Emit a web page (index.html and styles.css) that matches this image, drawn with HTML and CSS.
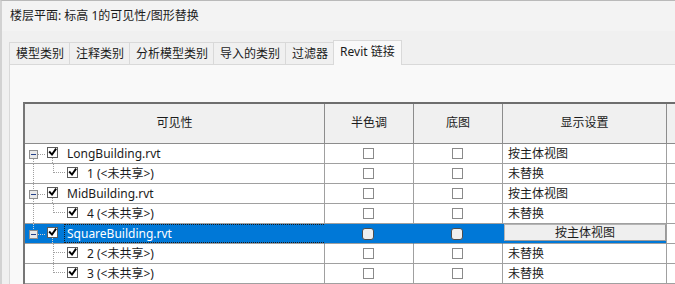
FILE: index.html
```html
<!DOCTYPE html>
<html lang="zh-CN">
<head>
<meta charset="utf-8">
<title>可见性/图形替换</title>
<link rel="stylesheet" href="styles.css">
</head>
<body>
<div class="window">
  <div class="titlebar">楼层平面: 标高 1的可见性/图形替换</div>
  <div class="main">
    <div class="tabs">
      <div class="tab">模型类别</div>
      <div class="tab">注释类别</div>
      <div class="tab">分析模型类别</div>
      <div class="tab">导入的类别</div>
      <div class="tab">过滤器</div>
      <div class="tab active">Revit 链接</div>
    </div>
    <div class="panel">
      <div class="grid">
        <div class="row head">
          <div class="cell">可见性</div>
          <div class="cell">半色调</div>
          <div class="cell">底图</div>
          <div class="cell">显示设置</div>
          <div class="cell"></div>
        </div>

        <div class="row">
          <div class="cell tree">
            <svg class="glyph l0" width="42" height="19" viewBox="0 0 42 19">
              <line class="dot" x1="8.5" y1="15" x2="8.5" y2="19"/>
              <rect class="exp" x="4.5" y="6.5" width="8" height="8"/>
              <line class="minus" x1="6" y1="10.5" x2="11" y2="10.5"/>
              <line class="dot" x1="13" y1="10.5" x2="21" y2="10.5"/>
              <line class="dot" x1="27.5" y1="14" x2="27.5" y2="19"/>
              <rect class="cb" x="22.5" y="3.5" width="10" height="10"/>
              <path class="chk" d="M24.8 8.2 L27 10.6 L30.6 5.4"/>
            </svg>
            <span class="label">LongBuilding.rvt</span>
          </div>
          <div class="cell center"><span class="box"></span></div>
          <div class="cell center"><span class="box"></span></div>
          <div class="cell text">按主体视图</div>
          <div class="cell"></div>
        </div>

        <div class="row">
          <div class="cell tree">
            <svg class="glyph l1" width="62" height="19" viewBox="0 0 62 19">
              <line class="dot" x1="8.5" y1="0" x2="8.5" y2="19"/>
              <line class="dot" x1="28.5" y1="0" x2="28.5" y2="9"/>
              <line class="dot" x1="29" y1="8.5" x2="40" y2="8.5"/>
              <rect class="cb" x="42.5" y="3.5" width="10" height="10"/>
              <path class="chk" d="M44.8 8.2 L47 10.6 L50.6 5.4"/>
            </svg>
            <span class="label">1 (&lt;未共享&gt;)</span>
          </div>
          <div class="cell center"><span class="box"></span></div>
          <div class="cell center"><span class="box"></span></div>
          <div class="cell text">未替换</div>
          <div class="cell"></div>
        </div>

        <div class="row">
          <div class="cell tree">
            <svg class="glyph l0" width="42" height="19" viewBox="0 0 42 19">
              <line class="dot" x1="8.5" y1="0" x2="8.5" y2="6"/>
              <line class="dot" x1="8.5" y1="15" x2="8.5" y2="19"/>
              <rect class="exp" x="4.5" y="6.5" width="8" height="8"/>
              <line class="minus" x1="6" y1="10.5" x2="11" y2="10.5"/>
              <line class="dot" x1="13" y1="10.5" x2="21" y2="10.5"/>
              <line class="dot" x1="27.5" y1="14" x2="27.5" y2="19"/>
              <rect class="cb" x="22.5" y="3.5" width="10" height="10"/>
              <path class="chk" d="M24.8 8.2 L27 10.6 L30.6 5.4"/>
            </svg>
            <span class="label">MidBuilding.rvt</span>
          </div>
          <div class="cell center"><span class="box"></span></div>
          <div class="cell center"><span class="box"></span></div>
          <div class="cell text">按主体视图</div>
          <div class="cell"></div>
        </div>

        <div class="row">
          <div class="cell tree">
            <svg class="glyph l1" width="62" height="19" viewBox="0 0 62 19">
              <line class="dot" x1="8.5" y1="0" x2="8.5" y2="19"/>
              <line class="dot" x1="28.5" y1="0" x2="28.5" y2="9"/>
              <line class="dot" x1="29" y1="8.5" x2="40" y2="8.5"/>
              <rect class="cb" x="42.5" y="3.5" width="10" height="10"/>
              <path class="chk" d="M44.8 8.2 L47 10.6 L50.6 5.4"/>
            </svg>
            <span class="label">4 (&lt;未共享&gt;)</span>
          </div>
          <div class="cell center"><span class="box"></span></div>
          <div class="cell center"><span class="box"></span></div>
          <div class="cell text">未替换</div>
          <div class="cell"></div>
        </div>

        <div class="row selected">
          <div class="cell tree">
            <svg class="glyph l0" width="39" height="19" viewBox="0 0 39 19">
              <line class="dot" x1="8.5" y1="0" x2="8.5" y2="6"/>
              <rect class="exp" x="4.5" y="6.5" width="8" height="8"/>
              <line class="minus" x1="6" y1="10.5" x2="11" y2="10.5"/>
              <line class="dot light" x1="13" y1="10.5" x2="21" y2="10.5"/>
              <line class="dot light" x1="27.5" y1="14" x2="27.5" y2="19"/>
              <rect class="cb" x="22.5" y="3.5" width="10" height="10"/>
              <path class="chk" d="M24.8 8.2 L27 10.6 L30.6 5.4"/>
            </svg>
            <span class="label focus">SquareBuilding.rvt</span>
          </div>
          <div class="cell center"><span class="box round"></span></div>
          <div class="cell center"><span class="box round"></span></div>
          <div class="cell btncell"><span class="btn">按主体视图</span></div>
          <div class="cell"></div>
        </div>

        <div class="row">
          <div class="cell tree">
            <svg class="glyph l1" width="62" height="19" viewBox="0 0 62 19">
              <line class="dot" x1="28.5" y1="0" x2="28.5" y2="19"/>
              <line class="dot" x1="29" y1="8.5" x2="40" y2="8.5"/>
              <rect class="cb" x="42.5" y="3.5" width="10" height="10"/>
              <path class="chk" d="M44.8 8.2 L47 10.6 L50.6 5.4"/>
            </svg>
            <span class="label">2 (&lt;未共享&gt;)</span>
          </div>
          <div class="cell center"><span class="box"></span></div>
          <div class="cell center"><span class="box"></span></div>
          <div class="cell text">未替换</div>
          <div class="cell"></div>
        </div>

        <div class="row">
          <div class="cell tree">
            <svg class="glyph l1" width="62" height="19" viewBox="0 0 62 19">
              <line class="dot" x1="28.5" y1="0" x2="28.5" y2="9"/>
              <line class="dot" x1="29" y1="8.5" x2="40" y2="8.5"/>
              <rect class="cb" x="42.5" y="3.5" width="10" height="10"/>
              <path class="chk" d="M44.8 8.2 L47 10.6 L50.6 5.4"/>
            </svg>
            <span class="label">3 (&lt;未共享&gt;)</span>
          </div>
          <div class="cell center"><span class="box"></span></div>
          <div class="cell center"><span class="box"></span></div>
          <div class="cell text">未替换</div>
          <div class="cell"></div>
        </div>
      </div>
    </div>
  </div>
</div>
</body>
</html>
```

FILE: styles.css
```css
* {
  box-sizing: border-box;
}

html, body {
  margin: 0;
  padding: 0;
  width: 675px;
  height: 284px;
  overflow: hidden;
  background: #f0f0f0;
}

body {
  font-family: "Noto Sans", "Noto Sans CJK SC", sans-serif;
  font-size: 12px;
  color: #1b1b1b;
}

.window {
  border-top: 1px solid #b9b9b9;
  border-left: 2px solid #d2d2d2;
  height: 284px;
  width: 675px;
}

.titlebar {
  height: 30px;
  line-height: 30px;
  padding-left: 8px;
  background: #f3f3f3;
  white-space: nowrap;
}

.main {
  background: #f0f0f0;
  padding-left: 7px;
  height: 253px;
}

.tabs {
  display: flex;
  align-items: flex-end;
  height: 33px;
}

.tab {
  height: 22px;
  line-height: 21px;
  padding: 0 5px 0 6px;
  border: 1px solid #d9d9d9;
  border-bottom: none;
  background: #f0f0f0;
  margin-left: -1px;
  white-space: nowrap;
}

.tab:first-child {
  margin-left: 0;
}

.tab.active {
  height: 25px;
  line-height: 22px;
  margin-bottom: -1px;
  padding: 0 6px 0 6px;
  background: #f9f9f9;
  position: relative;
  z-index: 1;
}

.panel {
  background: #f9f9f9;
  border-top: 1px solid #d9d9d9;
  border-left: 1px solid #d9d9d9;
  padding: 37px 0 0 13px;
  height: 220px;
}

.grid {
  border-top: 2px solid #6e6e6e;
  border-left: 2px solid #767676;
  width: 720px;
  background: #ffffff;
}

.row {
  display: grid;
  grid-template-columns: 300px 89px 89px 164px 78px;
  height: 20px;
}

.cell {
  border-right: 1px solid #a0a0a0;
  border-bottom: 1px solid #a0a0a0;
  height: 100%;
  white-space: nowrap;
  line-height: 19px;
  overflow: hidden;
}

.row.head {
  height: 40px;
}

.row.head .cell {
  background: #f0f0f0;
  text-align: center;
  line-height: 38px;
  border-right-color: #8c8c8c;
  border-bottom-color: #8c8c8c;
}

.tree {
  display: flex;
  align-items: flex-start;
}

.glyph {
  display: block;
  flex: none;
}

.glyph .dot {
  stroke: #a0a0a0;
  stroke-width: 1;
  stroke-dasharray: 1 1;
  fill: none;
}

.glyph .exp {
  fill: #e9e9e9;
  stroke: #8e8e8e;
  stroke-width: 1;
}

.glyph .minus {
  stroke: #24428a;
  stroke-width: 1;
}

.glyph .cb {
  fill: #ffffff;
  stroke: #5c5c5c;
  stroke-width: 1;
}

.glyph .chk {
  fill: none;
  stroke: #000000;
  stroke-width: 1.9;
  stroke-linecap: square;
  stroke-linejoin: miter;
}

.label {
  line-height: 19px;
  height: 19px;
}

.center {
  display: flex;
  align-items: center;
  justify-content: center;
  padding-right: 2px;
}

.box {
  display: block;
  width: 11px;
  height: 11px;
  border: 1px solid #8a8a8a;
  background: #ffffff;
}

.text {
  padding-left: 5px;
}

/* selected row */
.row.selected .cell {
  background: #0078d7;
  color: #ffffff;
  border-right-color: #0078d7;
}

.row.selected .cell:nth-child(4) {
  border-right-color: #a0a0a0;
}

.row.selected .cell:last-child {
  background: #ffffff;
}

.row.selected .glyph .dot {
  stroke: #d0d0d0;
}

.label.focus {
  flex: 1;
  margin-left: 0;
  padding-left: 2px;
  border: 1px dotted #1a1a1a;
  border-right: none;
  line-height: 17px;
}

.box.round {
  width: 12px;
  height: 12px;
  border: 1px solid #4d4d4d;
  border-radius: 3px;
  background: #efefef;
}

.btncell {
  padding: 0 0 1px 1px;
}

.btn {
  display: block;
  height: 17px;
  margin-top: 0;
  line-height: 16px;
  text-align: center;
  background: #efefef;
  color: #1b1b1b;
  border: 1px solid #b4b4b4;
  border-right-color: #9a9a9a;
  border-bottom-color: #9a9a9a;
}
```
